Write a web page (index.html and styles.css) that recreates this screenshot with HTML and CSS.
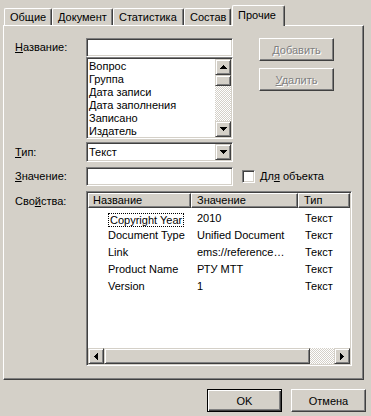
FILE: index.html
```html
<!doctype html>
<html lang="ru">
    <head>
        <meta charset="UTF-8" />
        <title>Свойства документа</title>
        <link rel="stylesheet" href="styles.css">
    </head>
    <body>
        <div class="dialog">
            <div class="tabs">
                <div class="tab tab-general">Общие</div>
                <div class="tab tab-document">Документ</div>
                <div class="tab tab-stats">Статистика</div>
                <div class="tab tab-contents">Состав</div>
                <div class="tab tab-custom active">Прочие</div>
            </div>

            <div class="panel">
                <div class="row row-name">
                    <div class="label"><u>Н</u>азвание:</div>
                    <div class="field-stack">
                        <div class="edit sunken"></div>
                        <div class="listbox sunken">
                            <ul class="items">
                                <li>Вопрос</li>
                                <li>Группа</li>
                                <li>Дата записи</li>
                                <li>Дата заполнения</li>
                                <li>Записано</li>
                                <li>Издатель</li>
                            </ul>
                            <div class="vscroll">
                                <div class="sb-btn">
                                    <svg width="7" height="4" shape-rendering="crispEdges"><path d="M3 0h1v1h1v1h1v1h1v1H0V3h1V2h1V1h1z" /></svg>
                                </div>
                                <div class="sb-thumb"></div>
                                <div class="sb-track"></div>
                                <div class="sb-btn">
                                    <svg width="7" height="4" shape-rendering="crispEdges"><path d="M0 0h7v1H6v1H5v1H4v1H3V3H2V2H1V1H0z" /></svg>
                                </div>
                            </div>
                        </div>
                    </div>
                    <div class="side-buttons">
                        <button type="button" class="button disabled"><u>Д</u>обавить</button>
                        <button type="button" class="button disabled"><u>У</u>далить</button>
                    </div>
                </div>

                <div class="row row-type">
                    <div class="label"><u>Т</u>ип:</div>
                    <div class="combo sunken">
                        <span class="combo-text">Текст</span>
                        <div class="sb-btn">
                            <svg width="7" height="4" shape-rendering="crispEdges"><path d="M0 0h7v1H6v1H5v1H4v1H3V3H2V2H1V1H0z" /></svg>
                        </div>
                    </div>
                </div>

                <div class="row row-value">
                    <div class="label"><u>З</u>начение:</div>
                    <div class="edit sunken"></div>
                    <div class="checkbox sunken"></div>
                    <div class="check-label">Дл<u>я</u> объекта</div>
                </div>

                <div class="row row-props">
                    <div class="label">Сво<u>й</u>ства:</div>
                    <div class="listview sunken">
                        <div class="lv-header">
                            <div class="lv-col col-name">Название</div>
                            <div class="lv-col col-value">Значение</div>
                            <div class="lv-col col-type">Тип</div>
                        </div>
                        <div class="lv-rows">
                            <div class="lv-row">
                                <div class="col-name"><span class="focus">Copyright Year</span></div>
                                <div class="col-value">2010</div>
                                <div class="col-type">Текст</div>
                            </div>
                            <div class="lv-row">
                                <div class="col-name">Document Type</div>
                                <div class="col-value">Unified Document</div>
                                <div class="col-type">Текст</div>
                            </div>
                            <div class="lv-row">
                                <div class="col-name">Link</div>
                                <div class="col-value">ems://reference…</div>
                                <div class="col-type">Текст</div>
                            </div>
                            <div class="lv-row">
                                <div class="col-name">Product Name</div>
                                <div class="col-value">РТУ МТТ</div>
                                <div class="col-type">Текст</div>
                            </div>
                            <div class="lv-row">
                                <div class="col-name">Version</div>
                                <div class="col-value">1</div>
                                <div class="col-type">Текст</div>
                            </div>
                        </div>
                        <div class="hscroll">
                            <div class="sb-btn">
                                <svg width="4" height="7" shape-rendering="crispEdges"><path d="M3 0h1v7H3V6H2V5H1V4H0V3h1V2h1V1h1z" /></svg>
                            </div>
                            <div class="sb-thumb"></div>
                            <div class="sb-track"></div>
                            <div class="sb-btn">
                                <svg width="4" height="7" shape-rendering="crispEdges"><path d="M0 0h1v1h1v1h1v1h1v1H3v1H2v1H1v1H0z" /></svg>
                            </div>
                        </div>
                    </div>
                </div>
            </div>

            <div class="footer">
                <button type="button" class="button default">OK</button>
                <button type="button" class="button">Отмена</button>
            </div>
        </div>
    </body>
</html>
```

FILE: styles.css
```css
html,
body {
    height: 100%;
    margin: 0;
}
body {
    background: #d4d0c8;
    color: #000;
    font: 11px "Liberation Sans", Arial, sans-serif;
}
.dialog {
    padding-top: 8px;
}

/* 3D borders, classic style */
.sunken {
    box-sizing: border-box;
    border: 1px solid;
    border-color: #808080 #fff #fff #808080;
    box-shadow: inset 1px 1px #404040, inset -1px -1px #d4d0c8;
    padding: 1px;
}

/* tabs */
.tabs {
    display: flex;
    align-items: flex-end;
    height: 17px;
    margin-left: 4px;
}
.tab {
    box-sizing: border-box;
    height: 17px;
    padding-left: 5px;
    line-height: 16px;
    border: 1px solid;
    border-color: #fff #404040 transparent #fff;
    border-bottom: none;
    border-radius: 2px 2px 0 0;
    box-shadow: inset -1px 0 #808080;
    white-space: nowrap;
}
.tab-general {
    width: 48px;
}
.tab-document {
    width: 61px;
}
.tab-stats {
    width: 71px;
}
.tab-contents {
    width: 47px;
}
.tab.active {
    width: 53px;
    height: 21px;
    margin-left: 1px;
    margin-bottom: -1px;
    padding-top: 1px;
    position: relative;
    z-index: 1;
    background: #d4d0c8;
}

.panel {
    box-sizing: border-box;
    width: 361px;
    height: 355px;
    margin-left: 3px;
    padding: 12px 0 0 11px;
    border: 1px solid;
    border-color: #fff #404040 #404040 #fff;
    box-shadow: inset -1px -1px #808080;
}
.row {
    display: flex;
}
.label {
    width: 71px;
    flex: none;
}
.row-name .label {
    line-height: 19px;
}
.row-type {
    margin-top: 3px;
}
.row-type .label {
    line-height: 20px;
}
.row-value {
    margin-top: 5px;
}
.row-value .label {
    line-height: 19px;
}
.row-props {
    margin-top: 5px;
}
.row-props .label {
    padding-top: 4px;
    line-height: 13px;
}

.field-stack {
    width: 147px;
}
.edit {
    width: 147px;
    height: 19px;
    background: #fff;
}
.listbox {
    display: flex;
    width: 147px;
    height: 82px;
    background: #fff;
}
.items {
    flex: 1;
    margin: 0;
    padding: 1px 0 0 1px;
    list-style: none;
    line-height: 13px;
    overflow: hidden;
}

/* scrollbars */
.vscroll {
    display: flex;
    flex-direction: column;
    width: 16px;
}
.hscroll {
    display: flex;
    flex: none;
    height: 16px;
}
.sb-btn,
.sb-thumb {
    box-sizing: border-box;
    flex: none;
    background: #d4d0c8;
    border: 1px solid;
    border-color: #d4d0c8 #404040 #404040 #d4d0c8;
    box-shadow: inset 1px 1px #fff, inset -1px -1px #808080;
}
.sb-btn {
    display: flex;
    align-items: center;
    justify-content: center;
    width: 16px;
    height: 16px;
}
.sb-btn svg {
    display: block;
    fill: #000;
}
.vscroll .sb-thumb {
    height: 11px;
}
.hscroll .sb-thumb {
    width: 206px;
}
.sb-track {
    flex: 1;
    background: repeating-conic-gradient(#fff 0 25%, #d4d0c8 0 50%) 0 0 / 2px 2px;
}

/* buttons */
.side-buttons {
    display: flex;
    flex-direction: column;
    gap: 7px;
    margin-left: 26px;
}
.button {
    box-sizing: border-box;
    width: 75px;
    height: 23px;
    padding: 0;
    font: inherit;
    color: #000;
    text-align: center;
    background: #d4d0c8;
    border: 1px solid;
    border-color: #fff #404040 #404040 #fff;
    box-shadow: inset -1px -1px #808080;
}
.button.disabled {
    color: #808080;
    text-shadow: 1px 1px 0 #fff;
}
.button.default {
    border-color: #000;
    box-shadow: inset 1px 1px #fff, inset -1px -1px #404040, inset -2px -2px #808080;
}

.combo {
    display: flex;
    width: 147px;
    height: 20px;
    background: #fff;
}
.combo-text {
    flex: 1;
    padding-left: 1px;
    line-height: 16px;
}

.checkbox {
    width: 13px;
    height: 13px;
    margin: 3px 0 0 9px;
    background: #fff;
}
.check-label {
    margin-left: 5px;
    line-height: 19px;
}

/* properties list */
.listview {
    display: flex;
    flex-direction: column;
    width: 266px;
    height: 175px;
    background: #fff;
}
.lv-header {
    display: flex;
    flex: none;
}
.lv-col {
    box-sizing: border-box;
    height: 15px;
    padding-left: 5px;
    line-height: 13px;
    background: #d4d0c8;
    border: 1px solid;
    border-color: #fff #404040 #404040 #fff;
    box-shadow: inset -1px -1px #808080;
}
.lv-col.col-name {
    padding-left: 4px;
}
.lv-rows {
    flex: 1;
    padding-top: 2px;
}
.lv-row {
    display: flex;
    height: 17px;
    line-height: 17px;
}
.col-name,
.col-value,
.col-type {
    box-sizing: border-box;
    flex: none;
    white-space: nowrap;
    overflow: hidden;
}
.col-name {
    width: 103px;
}
.col-value {
    width: 107px;
}
.col-type {
    width: 52px;
}
.lv-row .col-name {
    padding-left: 20px;
}
.lv-row .col-value {
    padding-left: 6px;
}
.lv-row .col-type {
    padding-left: 7px;
}
.focus {
    display: inline-block;
    vertical-align: top;
    margin-top: 3px;
    padding: 0 1px;
    line-height: 12px;
    border: 1px dotted #000;
}

.footer {
    display: flex;
    justify-content: flex-end;
    gap: 9px;
    margin-top: 9px;
    padding-right: 5px;
}
```
